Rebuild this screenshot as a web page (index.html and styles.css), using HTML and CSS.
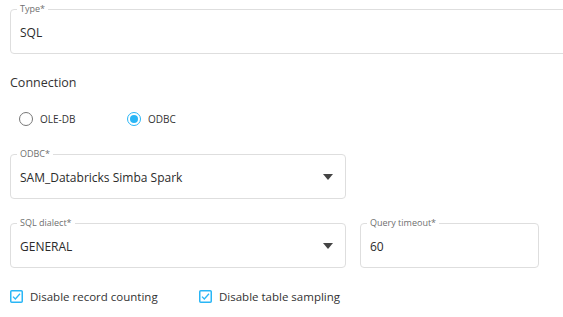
FILE: index.html
```html
<!DOCTYPE html>
<html>
<head>
    <meta name="viewport" content="width=device-width, initial-scale=1.0">
    <link rel="stylesheet" href="styles.css">
</head>
<body>
    <div class="form">
        <!-- Type -->
        <div class="field field-wide">
            <span class="field-label">Type*</span>
            <span class="field-value">SQL</span>
        </div>

        <div class="section-title">Connection</div>

        <!-- Connection type -->
        <div class="radio-row">
            <label class="radio">
                <span class="radio-dot"></span>
                OLE-DB
            </label>
            <label class="radio checked">
                <span class="radio-dot"></span>
                ODBC
            </label>
        </div>

        <!-- ODBC -->
        <div class="field field-select field-odbc">
            <span class="field-label">ODBC*</span>
            <span class="field-value">SAM_Databricks Simba Spark</span>
            <svg class="caret" width="10" height="6" viewBox="0 0 10 6"><path d="M0 0H10L5 6Z" fill="#444"/></svg>
        </div>

        <div class="field-row">
            <div class="field field-select field-dialect">
                <span class="field-label">SQL dialect*</span>
                <span class="field-value">GENERAL</span>
                <svg class="caret" width="10" height="6" viewBox="0 0 10 6"><path d="M0 0H10L5 6Z" fill="#444"/></svg>
            </div>
            <div class="field field-timeout">
                <span class="field-label">Query timeout*</span>
                <span class="field-value">60</span>
            </div>
        </div>

        <!-- Options -->
        <div class="check-row">
            <label class="check">
                <svg width="13" height="13" viewBox="0 0 13 13"><rect x="0.75" y="0.75" width="11.5" height="11.5" rx="1" fill="none" stroke="#29b6f6" stroke-width="1.5"/><path d="M3 6.6L5.3 9L10 3.8" fill="none" stroke="#29b6f6" stroke-width="1.3"/></svg>
                Disable record counting
            </label>
            <label class="check">
                <svg width="13" height="13" viewBox="0 0 13 13"><rect x="0.75" y="0.75" width="11.5" height="11.5" rx="1" fill="none" stroke="#29b6f6" stroke-width="1.5"/><path d="M3 6.6L5.3 9L10 3.8" fill="none" stroke="#29b6f6" stroke-width="1.3"/></svg>
                Disable table sampling
            </label>
        </div>
    </div>
</body>
</html>
```

FILE: styles.css
```css
body {
    margin: 0;
    background-color: #fff;
    font-family: 'Open Sans', Arial, sans-serif;
    color: #333;
    overflow: hidden;
}

.form {
    padding: 9px 10px;
}

/* outlined fields */
.field {
    position: relative;
    box-sizing: border-box;
    height: 45px;
    border: 1px solid #dedede;
    border-radius: 4px;
    display: flex;
    align-items: center;
    padding: 1px 9px 0 9px;
}

.field-label {
    position: absolute;
    top: -7px;
    left: 6px;
    padding: 0 3px;
    background-color: #fff;
    font-size: 9px;
    line-height: 12px;
    color: #6f6f6f;
}

.field-value {
    flex: 1;
    font-size: 12px;
    color: #2b2b2b;
}

.field-wide {
    width: 600px;
}

.field-odbc {
    width: 336px;
    margin-top: 25px;
}

.field-row {
    display: flex;
    gap: 14px;
    margin-top: 24px;
}

.field-dialect {
    width: 336px;
}

.field-timeout {
    width: 179px;
}

.caret {
    margin-right: 3px;
}

.section-title {
    margin-top: 19px;
    font-size: 12.5px;
    line-height: 20px;
}

/* radios */
.radio-row {
    display: flex;
    margin-top: 16px;
    padding-left: 9px;
    height: 20px;
}

.radio {
    display: flex;
    align-items: center;
    gap: 7px;
    font-size: 10px;
    width: 108px;
}

.radio-dot {
    box-sizing: border-box;
    width: 14px;
    height: 14px;
    border: 1px solid #777;
    border-radius: 50%;
    display: flex;
    align-items: center;
    justify-content: center;
}

.radio.checked .radio-dot {
    border-color: #29b6f6;
}

    .radio.checked .radio-dot::after {
        content: '';
        width: 8px;
        height: 8px;
        border-radius: 50%;
        background-color: #29b6f6;
    }

/* checkboxes */
.check-row {
    display: flex;
    margin-top: 18px;
    height: 20px;
}

.check {
    display: flex;
    align-items: center;
    gap: 7px;
    font-size: 11.5px;
    width: 189px;
}
```
